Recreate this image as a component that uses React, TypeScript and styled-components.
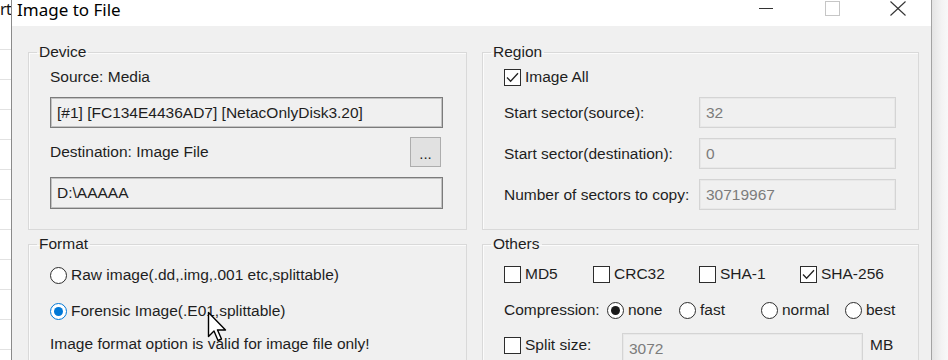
import React from "react";
import styled, { createGlobalStyle } from "styled-components";

const GlobalStyle = createGlobalStyle`
  html, body { margin: 0; padding: 0; background: #fff; }
  body { font-family: "Liberation Sans", Arial, sans-serif; }
  #root { width: 948px; height: 360px; overflow: hidden; }
`;

const Screen = styled.div`
  position: relative;
  display: flex;
  width: 948px;
  height: 360px;
  overflow: hidden;
`;

const BackWindow = styled.div`
  flex: none;
  width: 11px;
  overflow: hidden;
  background-color: #fff;
  background-image: repeating-linear-gradient(
    to bottom,
    transparent 0,
    transparent 29px,
    #e2e2e2 29px,
    #e2e2e2 30px
  );
  background-position: 0 -10px;
`;

const BackText = styled.div`
  width: 11px;
  height: 22px;
  overflow: hidden;
  font-family: "Noto Sans", sans-serif;
  font-size: 16px;
  line-height: 19px;
  letter-spacing: -0.5px;
  color: #111;
  white-space: nowrap;
  background: #fff;
`;

const Dialog = styled.div`
  flex: none;
  width: 921px;
  box-sizing: border-box;
  display: flex;
  flex-direction: column;
  background: #f0f0f0;
  border-left: 1px solid #8a8a8a;
  border-right: 1px solid #a3a3a3;
`;

const Shadow = styled.div`
  flex: 1;
  background: linear-gradient(to right, #e4e4e4, #f3f3f3 60%, #f8f8f8);
`;

const TitleBar = styled.div`
  flex: none;
  height: 26px;
  display: flex;
  align-items: flex-start;
  background: #fff;
`;

const Title = styled.div`
  font-family: "Noto Sans", sans-serif;
  font-size: 17px;
  line-height: 19px;
  color: #000;
  padding-left: 5px;
  white-space: nowrap;
`;

const Captions = styled.div`
  margin-left: auto;
  display: flex;
`;

const CaptionButton = styled.div`
  width: 66px;
  height: 17px;
  display: flex;
  align-items: center;
  justify-content: center;
`;

const Body = styled.div`
  padding: 17px 12px 0 16px;
  display: grid;
  grid-template-columns: 439px 437px;
  column-gap: 15px;
  row-gap: 5px;
  align-items: stretch;
`;

const Group = styled.fieldset`
  margin: 0;
  padding: 0;
  min-width: 0;
  border: 1px solid #d9d9d9;
  box-shadow: inset 1px 1px 0 #fbfbfb;
`;

const Legend = styled.legend`
  margin-left: 8px;
  padding: 0 2px;
  font-size: 15.5px;
  line-height: 18px;
  color: #1e1e1e;
`;

const GroupContent = styled.div<{ $pt: number; $pr: number; $pb: number }>`
  display: flex;
  flex-direction: column;
  padding: ${(p) => p.$pt}px ${(p) => p.$pr}px ${(p) => p.$pb}px 21px;
`;

const Text = styled.span<{ $w?: number; $ml?: number }>`
  font-size: 15.5px;
  line-height: 18px;
  color: #1e1e1e;
  white-space: nowrap;
  margin-left: ${(p) => p.$ml ?? 0}px;
  ${(p) => (p.$w ? `width: ${p.$w}px; flex: none;` : "")}
`;

const Field = styled.div<{ $h: number; $mt?: number; $disabled?: boolean; $w?: number; $grow?: boolean }>`
  box-sizing: border-box;
  flex: ${(p) => (p.$grow ? "1 1 0" : "none")};
  height: ${(p) => p.$h}px;
  margin-top: ${(p) => p.$mt ?? 0}px;
  ${(p) => (p.$w ? `width: ${p.$w}px;` : "")}
  display: flex;
  align-items: center;
  padding: 0 6px;
  background: #f0f0f0;
  border: 1px solid ${(p) => (p.$disabled ? "#d4d4d4" : "#7b7b7b")};
  box-shadow: inset 0 0 0 1px ${(p) => (p.$disabled ? "#e8e8e8" : "#c2c2c2")};
  font-size: 15.5px;
  line-height: 18px;
  color: ${(p) => (p.$disabled ? "#7c7c7c" : "#1e1e1e")};
  white-space: nowrap;
`;

const Row = styled.div<{ $h: number; $mt?: number; $align?: string }>`
  flex: none;
  display: flex;
  align-items: ${(p) => p.$align ?? "center"};
  height: ${(p) => p.$h}px;
  margin-top: ${(p) => p.$mt ?? 0}px;
`;

const SpreadRow = styled(Row)`
  justify-content: space-between;
`;

const BrowseButton = styled.div`
  box-sizing: border-box;
  width: 31px;
  height: 30px;
  margin-right: 2px;
  background: #e1e1e1;
  border: 1px solid #adadad;
  display: flex;
  align-items: center;
  justify-content: center;
  font-size: 15px;
  line-height: 18px;
  padding-top: 4px;
  color: #1e1e1e;
`;

const Item = styled.div<{ $w?: number; $h?: number }>`
  display: flex;
  align-items: center;
  gap: 4px;
  ${(p) => (p.$w ? `width: ${p.$w}px; flex: none;` : "")}
  ${(p) => (p.$h ? `height: ${p.$h}px;` : "")}
`;

const Box = styled.span`
  box-sizing: border-box;
  width: 17px;
  height: 17px;
  flex: none;
  border: 1px solid #2d2d2d;
  background: #fff;
  display: flex;
  align-items: center;
  justify-content: center;
`;

const Circle = styled.span<{ $checked?: boolean; $color?: string }>`
  box-sizing: border-box;
  width: 17px;
  height: 17px;
  flex: none;
  border-radius: 50%;
  border: 1px solid ${(p) => p.$color ?? "#2d2d2d"};
  background: #fff;
  display: flex;
  align-items: center;
  justify-content: center;
  &::after {
    content: "";
    display: ${(p) => (p.$checked ? "block" : "none")};
    width: 9px;
    height: 9px;
    border-radius: 50%;
    background: ${(p) => p.$color ?? "#1a1a1a"};
  }
`;

const Cursor = styled.svg`
  position: absolute;
  left: 207px;
  top: 311px;
`;

const CheckBox = ({ checked, label, w, h }: { checked?: boolean; label: string; w?: number; h?: number }) => (
  <Item $w={w} $h={h}>
    <Box>
      {checked && (
        <svg width="13" height="11" viewBox="0 0 13 11">
          <polyline points="1,5.5 4.6,9.2 12,1.2" fill="none" stroke="#222" strokeWidth="1.3" />
        </svg>
      )}
    </Box>
    <Text>{label}</Text>
  </Item>
);

const Radio = ({ checked, label, w, color }: { checked?: boolean; label: string; w?: number; color?: string }) => (
  <Item $w={w}>
    <Circle $checked={checked} $color={color} />
    <Text>{label}</Text>
  </Item>
);

export default function App() {
  return (
    <>
      <GlobalStyle />
      <Screen>
        <BackWindow>
          <BackText>rt</BackText>
        </BackWindow>
        <Dialog>
          <TitleBar>
            <Title>Image to File</Title>
            <Captions>
              <CaptionButton>
                <svg width="14" height="15" viewBox="0 0 14 15">
                  <line x1="0" y1="7.5" x2="14" y2="7.5" stroke="#333" strokeWidth="1" />
                </svg>
              </CaptionButton>
              <CaptionButton>
                <svg width="15" height="15" viewBox="0 0 15 15">
                  <rect x="0.5" y="0.5" width="14" height="14" fill="none" stroke="#c6c6c6" strokeWidth="1" />
                </svg>
              </CaptionButton>
              <CaptionButton>
                <svg width="16" height="15" viewBox="0 0 16 15">
                  <line x1="0.5" y1="0.5" x2="15.5" y2="14.5" stroke="#333" strokeWidth="1.1" />
                  <line x1="15.5" y1="0.5" x2="0.5" y2="14.5" stroke="#333" strokeWidth="1.1" />
                </svg>
              </CaptionButton>
            </Captions>
          </TitleBar>
          <Body>
            <Group>
              <Legend>Device</Legend>
              <GroupContent $pt={7} $pr={23} $pb={19}>
                <Text>Source: Media</Text>
                <Field $h={31} $mt={11}>[#1] [FC134E4436AD7] [NetacOnlyDisk3.20]</Field>
                <SpreadRow $h={30} $mt={9}>
                  <Text>Destination: Image File</Text>
                  <BrowseButton>...</BrowseButton>
                </SpreadRow>
                <Field $h={32} $mt={10}>D:\AAAAA</Field>
              </GroupContent>
            </Group>
            <Group>
              <Legend>Region</Legend>
              <GroupContent $pt={7} $pr={22} $pb={19}>
                <Row $h={18}>
                  <CheckBox checked label="Image All" />
                </Row>
                <Row $h={31} $mt={11}>
                  <Text $w={195}>Start sector(source):</Text>
                  <Field $h={31} $grow $disabled>32</Field>
                </Row>
                <Row $h={31} $mt={10}>
                  <Text $w={195}>Start sector(destination):</Text>
                  <Field $h={31} $grow $disabled>0</Field>
                </Row>
                <Row $h={31} $mt={10}>
                  <Text $w={195}>Number of sectors to copy:</Text>
                  <Field $h={31} $grow $disabled>30719967</Field>
                </Row>
              </GroupContent>
            </Group>
            <Group>
              <Legend>Format</Legend>
              <GroupContent $pt={12} $pr={22} $pb={20}>
                <Row $h={20}>
                  <Radio label="Raw image(.dd,.img,.001 etc,splittable)" />
                </Row>
                <Row $h={20} $mt={16}>
                  <Radio checked color="#0078d7" label="Forensic Image(.E01,splittable)" />
                </Row>
                <Row $h={20} $mt={13}>
                  <Text>Image format option is valid for image file only!</Text>
                </Row>
              </GroupContent>
            </Group>
            <Group>
              <Legend>Others</Legend>
              <GroupContent $pt={11} $pr={22} $pb={20}>
                <Row $h={20}>
                  <CheckBox w={89} label="MD5" />
                  <CheckBox w={106} label="CRC32" />
                  <CheckBox w={101} label="SHA-1" />
                  <CheckBox checked label="SHA-256" />
                </Row>
                <Row $h={20} $mt={16}>
                  <Text $w={103}>Compression:</Text>
                  <Radio w={72} checked label="none" />
                  <Radio w={82} label="fast" />
                  <Radio w={84} label="normal" />
                  <Radio label="best" />
                </Row>
                <Row $h={31} $mt={13} $align="flex-start">
                  <CheckBox w={118} h={24} label="Split size:" />
                  <Field $h={31} $w={241} $disabled>3072</Field>
                  <Item $h={24}>
                    <Text $ml={7}>MB</Text>
                  </Item>
                </Row>
              </GroupContent>
            </Group>
          </Body>
        </Dialog>
        <Shadow />
        <Cursor width="22" height="33" viewBox="0 0 22 33">
          <path
            d="M1.5 1.5 L1.5 25.5 L7 20 L11 29.5 L14.5 28 L10.5 19 L18.5 19 Z"
            fill="#fff"
            stroke="#000"
            strokeWidth="1.4"
            strokeLinejoin="round"
          />
        </Cursor>
      </Screen>
    </>
  );
}
